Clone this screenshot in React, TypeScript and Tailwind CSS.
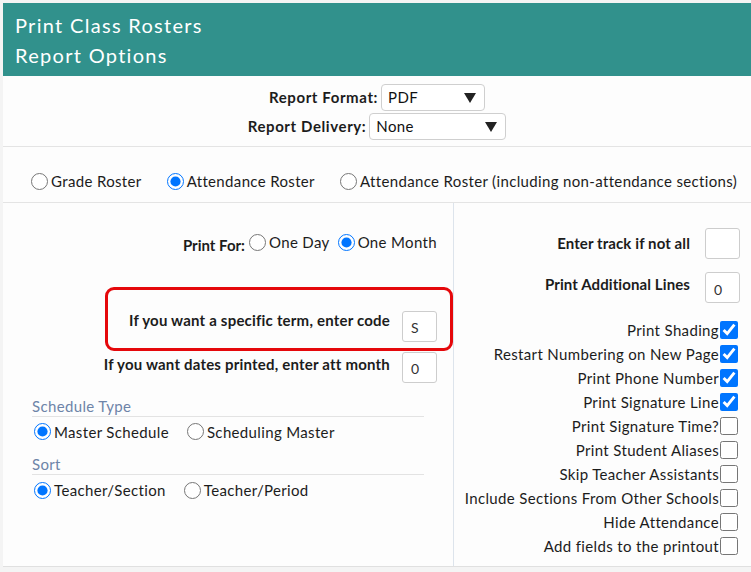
import type { ReactNode } from "react";

const FONT = "font-['Lato','Noto_Sans',sans-serif]";

function SelectBox({ value, width }: { value: string; width: string }) {
	return (
		<div
			className={`flex h-[27px] items-center justify-between rounded-[4px] border border-[#cfcfcf] bg-white pl-[6px] pr-[8px] text-[15px] font-normal text-[#111] ${width}`}
		>
			<span>{value}</span>
			<svg width="12" height="10" viewBox="0 0 12 10">
				<path d="M0 0 H12 L6 10 Z" fill="#222" />
			</svg>
		</div>
	);
}

function Radio({ checked, label }: { checked?: boolean; label: string }) {
	return (
		<label className="flex items-center">
			<input
				type="radio"
				defaultChecked={checked}
				className="m-0 h-[17px] w-[17px] accent-[#0075ff]"
			/>
			<span className="ml-[3px]">{label}</span>
		</label>
	);
}

function TextBox({ value }: { value?: string }) {
	return (
		<div className="flex h-[31px] w-[35px] items-center rounded-[3px] border border-[#cdcdcd] bg-white pl-[8px] pt-[3px] text-[14px] font-normal text-[#333]">
			{value}
		</div>
	);
}

function Check({ label, checked }: { label: string; checked?: boolean }) {
	return (
		<label className="flex h-[24px] items-center justify-end">
			<span>{label}</span>
			<input
				type="checkbox"
				defaultChecked={checked}
				className="m-0 ml-[1px] h-[18px] w-[18px] accent-[#0075ff]"
			/>
		</label>
	);
}

function Section({ title, children }: { title: string; children: ReactNode }) {
	return (
		<div>
			<div className="mr-[29px] border-b border-[#e3e3e3] pb-[1px] text-[15px] leading-[18px] text-[#6d84a8]">
				{title}
			</div>
			<div className="mt-[4px] flex items-center gap-[18px] pl-[2px]">
				{children}
			</div>
		</div>
	);
}

export default function App() {
	return (
		<div className={`h-[572px] w-[751px] bg-[#f4f4f4] pl-[3px] pt-[3px] text-[#1c1c1c] ${FONT}`}>
			<div className="flex h-[73px] flex-col justify-center bg-[#31918c] pl-[12px] text-[20px] leading-[30px] tracking-[1.3px] text-white">
				<div>Print Class Rosters</div>
				<div>Report Options</div>
			</div>

			<div className="bg-[#fdfdfd] tracking-[0.35px]">
				<div className="flex flex-col items-center gap-[2px] border-b border-[#e4e4e4] pb-[6px] pt-[8px] text-[15px]">
					<div className="flex items-center gap-[3px]">
						<span className="font-bold tracking-[0.6px]">Report Format:</span>
						<SelectBox value="PDF" width="w-[104px]" />
					</div>
					<div className="flex items-center gap-[3px]">
						<span className="font-bold tracking-[0.6px]">Report Delivery:</span>
						<SelectBox value="None" width="w-[137px]" />
					</div>
				</div>

				<div className="flex h-[56px] items-center gap-[25px] border-b border-[#e4e4e4] pl-[28px] pt-[14px] text-[15px]">
					<Radio label="Grade Roster" />
					<Radio label="Attendance Roster" checked />
					<Radio label="Attendance Roster (including non-attendance sections)" />
				</div>

				<div className="flex h-[364px] border-b border-[#e0e0e0] text-[15px]">
					<div className="flex w-[451px] flex-col border-r border-[#dde4ec]">
						<div className="mt-[25px] flex items-center justify-end pr-[16px]">
							<span className="mr-[4px] mt-[6px] font-bold tracking-normal">Print For:</span>
							<Radio label="One Day" />
							<div className="ml-[8px]">
								<Radio label="One Month" checked />
							</div>
						</div>

						<div className="ml-[102px] mt-[30px] flex h-[64px] w-[348px] items-end justify-end rounded-[9px] border-[3px] border-[#e5080b] pb-[6px] pr-[13px]">
							<span className="mb-[10px] mr-[12px] font-bold tracking-[0.2px]">
								If you want a specific term, enter code
							</span>
							<TextBox value="S" />
						</div>
						<div className="mt-[1px] flex items-center justify-end pr-[16px]">
							<span className="mb-[6px] mr-[12px] font-bold tracking-[0.2px]">
								If you want dates printed, enter att month
							</span>
							<TextBox value="0" />
						</div>

						<div className="ml-[29px] mt-[14px] flex flex-col gap-[12px]">
							<Section title="Schedule Type">
								<Radio label="Master Schedule" checked />
								<Radio label="Scheduling Master" />
							</Section>
							<Section title="Sort">
								<Radio label="Teacher/Section" checked />
								<Radio label="Teacher/Period" />
							</Section>
						</div>
					</div>

					<div className="flex flex-1 flex-col pr-[11px]">
						<div className="mt-[25px] flex items-center justify-end">
							<span className="mr-[15px] font-bold tracking-[0.1px]">Enter track if not all</span>
							<TextBox />
						</div>
						<div className="mt-[13px] flex items-center justify-end">
							<span className="mb-[6px] mr-[15px] font-bold tracking-[0.1px]">Print Additional Lines</span>
							<TextBox value="0" />
						</div>
						<div className="mt-[15px] flex flex-col pr-[2px]">
							<Check label="Print Shading" checked />
							<Check label="Restart Numbering on New Page" checked />
							<Check label="Print Phone Number" checked />
							<Check label="Print Signature Line" checked />
							<Check label="Print Signature Time?" />
							<Check label="Print Student Aliases" />
							<Check label="Skip Teacher Assistants" />
							<Check label="Include Sections From Other Schools" />
							<Check label="Hide Attendance" />
							<Check label="Add fields to the printout" />
						</div>
					</div>
				</div>
			</div>
		</div>
	);
}
